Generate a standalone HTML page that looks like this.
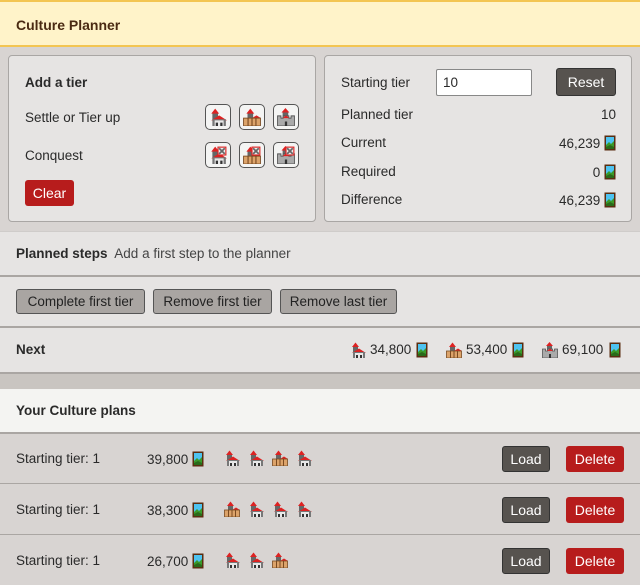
<!DOCTYPE html>
<html><head><meta charset="utf-8">
<style>
*{box-sizing:border-box;margin:0;padding:0}
body{width:640px;height:585px;overflow:hidden;background:#d8d4d2;font-family:"Liberation Sans",sans-serif;font-size:13.5px;color:#2a2a2a;position:relative}
.a{position:absolute}
.hdr{left:0;top:0;width:640px;height:47px;background:#fff3c9;border-top:2px solid #f3c552;border-bottom:2px solid #f3c552}
.hdr span{position:absolute;left:16px;top:15px;font-weight:bold;font-size:14px;color:#4a2a12}
.panel{background:#e6e4e3;border:1px solid #a9a6a4;border-radius:4px}
.b{font-weight:bold}
.ib{width:26px;height:26px;border:1px solid #555;border-radius:5px;background:#f4f4f3;display:flex;align-items:center;justify-content:center}
.btnr{background:#b71c1c;color:#fff;border-radius:3px;display:flex;align-items:center;justify-content:center}
.btnd{background:#57534f;color:#fff;border:1px solid #333;border-radius:3px;display:flex;align-items:center;justify-content:center}
.btng{background:#a9a5a2;border:1px solid #555;border-radius:3px;display:flex;align-items:center;justify-content:center;top:289px;height:25px;color:#222}
.row{left:0;width:640px}
.line{left:0;width:640px;height:2px;background:#aaa6a3}
svg{display:block}
.r{text-align:right}
.ic{display:inline-block;vertical-align:-3px}
.nx{position:absolute;top:342px;white-space:nowrap}
</style></head><body>
<svg width="0" height="0" style="position:absolute">
<defs>
<symbol id="pt" viewBox="0 0 12 16"><rect x="0.5" y="0.5" width="11" height="15" fill="#5a2d10"/><rect x="2" y="2" width="8" height="12" fill="#4ec3f0"/><path d="M2 10 L5 7 L7 9 L10 6 L10 14 L2 14Z" fill="#3a9a2a"/><path d="M2 12 L6 10 L10 12 L10 14 L2 14Z" fill="#2a6a1a"/></symbol>
<symbol id="va" viewBox="0 0 16 16"><rect x="3" y="4" width="5" height="7" fill="#666"/><path d="M2 5 L5.5 0.5 L9 5Z" fill="#d22"/><path d="M2 11 L9 6.5 L16 11Z" fill="#d22"/><rect x="3" y="10" width="12" height="6" fill="#777"/><rect x="5" y="11" width="8" height="5" fill="#e8e8e8"/><rect x="6" y="13" width="2" height="3" fill="#333"/><rect x="10" y="13" width="2" height="3" fill="#333"/></symbol>
<symbol id="vb" viewBox="0 0 16 16"><rect x="4" y="4" width="5" height="6" fill="#666"/><path d="M3 5 L6.5 0.5 L10 5Z" fill="#d22"/><path d="M8 9 L12 6.5 L16 9Z" fill="#d22"/><rect x="0.5" y="9" width="15" height="7" fill="#dca36a" stroke="#7a4a20" stroke-width="0.8"/><path d="M4.5 9v7M8 9v7M11.5 9v7" stroke="#7a4a20" stroke-width="1"/></symbol>
<symbol id="vc" viewBox="0 0 16 16"><rect x="5" y="3" width="5" height="6" fill="#666"/><path d="M4 4 L7.5 0 L11 4Z" fill="#d22"/><path d="M0.5 7h3v2h2v-2h5v2h2v-2h3v9h-15Z" fill="#aaa" stroke="#555" stroke-width="0.8"/><path d="M5 9 L8 6.5 L11 9Z" fill="#d22"/><rect x="7" y="12" width="2" height="4" fill="#333"/></symbol>
<symbol id="x" viewBox="0 0 16 16"><rect x="8" y="1" width="7" height="7" fill="#eee" stroke="#d22"/><path d="M9 2l5 5M14 2l-5 5" stroke="#666" stroke-width="1.5"/></symbol>
</defs></svg>

<div class="a hdr"><span>Culture Planner</span></div>

<div class="a panel" style="left:8px;top:55px;width:308px;height:167px"></div>
<div class="a b" style="left:25px;top:75px">Add a tier</div>
<div class="a" style="left:25px;top:110px">Settle or Tier up</div>
<div class="a" style="left:25px;top:148px">Conquest</div>
<div class="a ib" style="left:205px;top:104px"><svg width="18" height="18"><use href="#va"/></svg></div>
<div class="a ib" style="left:239px;top:104px"><svg width="18" height="18"><use href="#vb"/></svg></div>
<div class="a ib" style="left:273px;top:104px"><svg width="18" height="18"><use href="#vc"/></svg></div>
<div class="a ib" style="left:205px;top:142px"><svg width="18" height="18"><use href="#va"/><use href="#x"/></svg></div>
<div class="a ib" style="left:239px;top:142px"><svg width="18" height="18"><use href="#vb"/><use href="#x"/></svg></div>
<div class="a ib" style="left:273px;top:142px"><svg width="18" height="18"><use href="#vc"/><use href="#x"/></svg></div>
<div class="a btnr" style="left:25px;top:180px;width:49px;height:26px;font-size:14px">Clear</div>

<div class="a panel" style="left:324px;top:55px;width:308px;height:167px"></div>
<div class="a" style="left:341px;top:75px">Starting tier</div>
<div class="a" style="left:436px;top:69px;width:96px;height:27px;background:#fff;border:1px solid #888;border-radius:2px;padding:5px 0 0 6px">10</div>
<div class="a btnd" style="left:556px;top:68px;width:60px;height:28px;font-size:14px">Reset</div>
<div class="a" style="left:341px;top:107px">Planned tier</div>
<div class="a r" style="left:540px;top:107px;width:76px">10</div>
<div class="a" style="left:341px;top:135px">Current</div>
<div class="a r" style="left:500px;top:135px;width:116px">46,239 <svg class="ic" width="12" height="16"><use href="#pt"/></svg></div>
<div class="a" style="left:341px;top:164px">Required</div>
<div class="a r" style="left:500px;top:164px;width:116px">0 <svg class="ic" width="12" height="16"><use href="#pt"/></svg></div>
<div class="a" style="left:341px;top:192px">Difference</div>
<div class="a r" style="left:500px;top:192px;width:116px">46,239 <svg class="ic" width="12" height="16"><use href="#pt"/></svg></div>

<div class="a row" style="top:231px;height:45px;background:#e6e4e3;border-top:1px solid #cfccca"></div>
<div class="a" style="left:16px;top:246px"><b>Planned steps</b>&nbsp; <span style="color:#444">Add a first step to the planner</span></div>
<div class="a line" style="top:275px"></div>
<div class="a row" style="top:277px;height:49px;background:#e6e4e3"></div>
<div class="a btng" style="left:16px;width:129px">Complete first tier</div>
<div class="a btng" style="left:153px;width:119px">Remove first tier</div>
<div class="a btng" style="left:280px;width:117px">Remove last tier</div>
<div class="a line" style="top:326px"></div>
<div class="a row" style="top:328px;height:44px;background:#e6e4e3"></div>
<div class="a b" style="left:16px;top:342px">Next</div>
<div class="nx" style="left:350px"><svg class="ic" width="16" height="16"><use href="#va"/></svg></div>
<div class="nx" style="left:370px">34,800</div>
<div class="nx" style="left:416px"><svg class="ic" width="12" height="16"><use href="#pt"/></svg></div>
<div class="nx" style="left:446px"><svg class="ic" width="16" height="16"><use href="#vb"/></svg></div>
<div class="nx" style="left:466px">53,400</div>
<div class="nx" style="left:512px"><svg class="ic" width="12" height="16"><use href="#pt"/></svg></div>
<div class="nx" style="left:542px"><svg class="ic" width="16" height="16"><use href="#vc"/></svg></div>
<div class="nx" style="left:562px">69,100</div>
<div class="nx" style="left:609px"><svg class="ic" width="12" height="16"><use href="#pt"/></svg></div>
<div class="a line" style="top:372px"></div>
<div class="a row" style="top:374px;height:15px;background:#c9c5c1"></div>
<div class="a row" style="top:389px;height:43px;background:#f4f4f2"></div>
<div class="a b" style="left:16px;top:403px">Your Culture plans</div>
<div class="a line" style="top:432px"></div>

<div class="a" style="left:16px;top:451px">Starting tier: 1</div>
<div class="a" style="left:147px;top:451px;white-space:nowrap">39,800 <svg class="ic" width="12" height="16"><use href="#pt"/></svg></div>
<div class="a" style="left:224px;top:450px;display:flex;gap:8px"><svg width="16" height="16"><use href="#va"/></svg><svg width="16" height="16"><use href="#va"/></svg><svg width="16" height="16"><use href="#vb"/></svg><svg width="16" height="16"><use href="#va"/></svg></div>
<div class="a btnd" style="left:502px;top:446px;width:48px;height:26px;font-size:14px">Load</div>
<div class="a btnr" style="left:566px;top:446px;width:58px;height:26px;font-size:14px">Delete</div>
<div class="a line" style="top:483px;height:1px"></div>

<div class="a" style="left:16px;top:502px">Starting tier: 1</div>
<div class="a" style="left:147px;top:502px;white-space:nowrap">38,300 <svg class="ic" width="12" height="16"><use href="#pt"/></svg></div>
<div class="a" style="left:224px;top:501px;display:flex;gap:8px"><svg width="16" height="16"><use href="#vb"/></svg><svg width="16" height="16"><use href="#va"/></svg><svg width="16" height="16"><use href="#va"/></svg><svg width="16" height="16"><use href="#va"/></svg></div>
<div class="a btnd" style="left:502px;top:497px;width:48px;height:26px;font-size:14px">Load</div>
<div class="a btnr" style="left:566px;top:497px;width:58px;height:26px;font-size:14px">Delete</div>
<div class="a line" style="top:534px;height:1px"></div>

<div class="a" style="left:16px;top:553px">Starting tier: 1</div>
<div class="a" style="left:147px;top:553px;white-space:nowrap">26,700 <svg class="ic" width="12" height="16"><use href="#pt"/></svg></div>
<div class="a" style="left:224px;top:552px;display:flex;gap:8px"><svg width="16" height="16"><use href="#va"/></svg><svg width="16" height="16"><use href="#va"/></svg><svg width="16" height="16"><use href="#vb"/></svg></div>
<div class="a btnd" style="left:502px;top:548px;width:48px;height:26px;font-size:14px">Load</div>
<div class="a btnr" style="left:566px;top:548px;width:58px;height:26px;font-size:14px">Delete</div>
</body></html>
